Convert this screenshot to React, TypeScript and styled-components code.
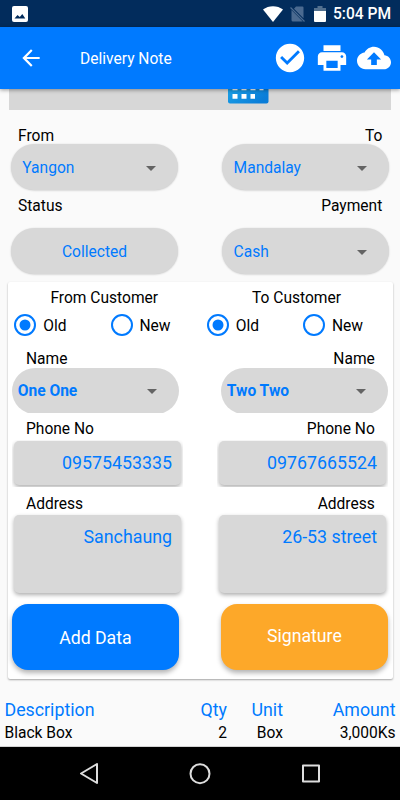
import React from 'react';
import styled, { createGlobalStyle } from 'styled-components';

const BLUE = '#007aff';
const GRAY = '#d8d8d8';

const GlobalStyle = createGlobalStyle`
  *, *::before, *::after { box-sizing: border-box; }
  html, body { margin: 0; padding: 0; background: #fafafa; }
  body {
    font-family: Roboto, 'Liberation Sans', sans-serif;
    font-size: 15.57px;
    color: #000;
    overflow: hidden;
  }
  button { font-family: inherit; }
`;

const Screen = styled.div`
  width: 400px;
  height: 800px;
  display: flex;
  flex-direction: column;
  background: #fafafa;
  overflow: hidden;
`;

const StatusBar = styled.header`
  flex: none;
  height: 27px;
  padding: 0 9px 0 12px;
  display: flex;
  align-items: center;
  background: #022c5c;
`;

const StatusIcons = styled.div`
  display: flex;
  align-items: center;
  margin-left: auto;
`;

const StatusSvg = styled.svg<{ $gap: number }>`
  display: block;
  margin-right: ${(p) => p.$gap}px;
`;

const Clock = styled.span`
  font-size: 15.57px;
  font-weight: 500;
  line-height: 25px;
  color: #fff;
  padding-top: 2px;
`;

const AppBar = styled.nav`
  flex: none;
  height: 62px;
  padding: 0 9px 0 18px;
  display: flex;
  align-items: center;
  background: ${BLUE};
  color: #fff;
  z-index: 1;
  box-shadow: 0 1px 4px rgba(0, 0, 0, 0.4);
`;

const IconButton = styled.button`
  display: flex;
  padding: 0;
  border: 0;
  background: none;
  color: inherit;
`;

const Title = styled.h1`
  margin: 0 auto 0 36px;
  font-size: 15.57px;
  font-weight: 400;
  line-height: 20px;
  padding-top: 1px;
`;

const Actions = styled.div`
  display: flex;
  gap: 8px;
`;

const Content = styled.main`
  flex: 1;
  min-height: 0;
  overflow: hidden;
  border-bottom: 1px solid #d2d2d2;
`;

const DateField = styled.div`
  height: 21px;
  margin: 0 9px;
  padding-left: 219px;
  background: #d7d7d7;
`;

const Columns = styled.div<{ $gap: number; $left: number; $top?: number }>`
  display: grid;
  grid-template-columns: 167px 167px;
  column-gap: ${(p) => p.$gap}px;
  padding: ${(p) => p.$top ?? 0}px 0 0 ${(p) => p.$left}px;
`;

const LabelRow = styled.div<{ $top: number; $bottom: number }>`
  display: flex;
  justify-content: space-between;
  line-height: 16px;
  padding: ${(p) => `${p.$top}px 17.7px ${p.$bottom}px 18px`};
`;

const Pill = styled.div<{ $centered?: boolean }>`
  height: 46px;
  padding: ${(p) => (p.$centered ? '2px 0 0' : '2px 22px 0 11.3px')};
  display: flex;
  align-items: center;
  justify-content: ${(p) => (p.$centered ? 'center' : 'space-between')};
  border-radius: 23px;
  background: ${GRAY};
  color: ${BLUE};
  box-shadow: 0 0.5px 2px rgba(0, 0, 0, 0.2);
`;

const PillClip = styled.div`
  height: 45px;
  overflow: hidden;
`;

const NamePill = styled(Pill)`
  padding: 0 22px 0 5.3px;
  font-weight: 700;
  box-shadow: none;
`;

const Card = styled.section`
  width: 384.5px;
  height: 397px;
  margin: 8px 0 0 8px;
  border-radius: 2px;
  background: #fff;
  box-shadow: 0 1px 2px rgba(0, 0, 0, 0.35);
`;

const CustomerHeads = styled.div`
  display: grid;
  grid-template-columns: 192.5px 192px;
  padding-top: 7px;
  line-height: 18px;
  text-align: center;
`;

const RadioRow = styled.div`
  display: grid;
  grid-template-columns: repeat(4, 96.25px);
  height: 36px;
  padding-left: 6.4px;
`;

const RadioLabel = styled.div`
  display: flex;
  align-items: center;
  gap: 6.8px;
`;

const RadioText = styled.span`
  line-height: 18px;
  padding-top: 1px;
`;

const RadioSvg = styled.svg`
  flex: none;
  display: block;
`;

const FieldClip = styled.div<{ $height: number }>`
  height: ${(p) => p.$height}px;
  padding: 1px 2px 0;
  margin: 0 -2px;
  overflow: hidden;
`;

const Field = styled.div<{ $height: number }>`
  height: ${(p) => p.$height}px;
  padding: 11px 9px 0 0;
  border-radius: 5px;
  background: ${GRAY};
  color: ${BLUE};
  font-size: 17.8px;
  line-height: 22px;
  text-align: right;
  box-shadow: 0 2px 4px rgba(0, 0, 0, 0.32);
`;

const ActionButton = styled.button<{ $tone: string; $lift?: boolean }>`
  height: 66px;
  padding: ${(p) => (p.$lift ? '0 1px 3px 0' : '1px 1px 0 0')};
  border: 0;
  border-radius: 16px;
  background: ${(p) => p.$tone};
  color: #fff;
  font-size: 17.7px;
  box-shadow: 0 3px 5px rgba(0, 0, 0, 0.3);
`;

const Table = styled.div`
  display: grid;
  grid-template-columns: 150px 72.5px 56px 112.5px;
  padding: 20px 4px 0 4.5px;
  row-gap: 2px;
`;

const HeadCell = styled.div<{ $start?: boolean }>`
  color: ${BLUE};
  font-size: 17.8px;
  line-height: 22px;
  text-align: ${(p) => (p.$start ? 'left' : 'right')};
`;

const Cell = styled.div<{ $start?: boolean }>`
  line-height: 20px;
  text-align: ${(p) => (p.$start ? 'left' : 'right')};
`;

const NavBar = styled.footer`
  flex: none;
  height: 53px;
  padding: 0 79px;
  display: flex;
  align-items: center;
  justify-content: space-between;
  background: #000;
`;

const Caret = () => (
  <svg width="10" height="5" viewBox="0 0 10 5" aria-hidden="true">
    <path d="M0 0h10L5 5z" fill="#646464" />
  </svg>
);

const Radio = ({ checked }: { checked: boolean }) => (
  <RadioSvg width="22" height="22" viewBox="0 0 22 22">
    <circle cx="11" cy="11" r="10" fill="none" stroke={BLUE} strokeWidth="2" />
    {checked && <circle cx="11" cy="11" r="5.5" fill={BLUE} />}
  </RadioSvg>
);

const MaterialIcon = ({ d, size }: { d: string; size: number }) => (
  <svg width={size} height={size} viewBox="0 0 24 24" fill="currentColor" aria-hidden="true">
    <path d={d} />
  </svg>
);

const CalendarIcon = () => (
  <svg width="41" height="15" viewBox="0 0 41 15" aria-hidden="true">
    <defs>
      <linearGradient id="calendar" x1="0" y1="0" x2="1" y2="0.4">
        <stop offset="0" stopColor="#1ba0e6" />
        <stop offset="1" stopColor="#0a7dd8" />
      </linearGradient>
    </defs>
    <path d="M0 0h40.500v12.500a2 2 0 0 1-2 2H2a2 2 0 0 1-2-2z" fill="url(#calendar)" />
    <path
      d="M4.500 0h5v1.200h-5zM13.500 0h5v1.200h-5zM22.500 0h5v1.200h-5zM31.500 0h4v1.200h-4zM4.500 5h5v4.700h-5zM13.500 5h5v4.700h-5zM22.500 5h4.500v4.700h-4.500z"
      fill="#fff"
    />
  </svg>
);

const radios = [
  { label: 'Old', checked: true },
  { label: 'New', checked: false },
  { label: 'Old', checked: true },
  { label: 'New', checked: false },
];

export default function App() {
  return (
    <>
      <GlobalStyle />
      <Screen>
        <StatusBar>
          <svg width="16" height="16" viewBox="0 0 16 16" aria-hidden="true">
            <rect width="16" height="16" rx="2" fill="#fff" />
            <path d="M2.500 12.500l3-3.500 2.300 2L10.300 8l3 4.500z" fill="#022c5c" />
          </svg>
          <StatusIcons>
            <StatusSvg $gap={7} width="20" height="16" viewBox="0 0 20 16">
              <path d="M10 16L0 3.600C5.500-.900 14.500-.900 20 3.600z" fill="#fff" />
            </StatusSvg>
            <StatusSvg $gap={9} width="15" height="16" viewBox="0 0 15 16">
              <path d="M6 0.500h6.500a1 1 0 0 1 1 1v10.800L4 2.800zM1.500 4l11.300 11.500H3a1.500 1.500 0 0 1-1.500-1.500z" fill="#4b6a90" />
              <path d="M.5 1.500l14 14" stroke="#4b6a90" strokeWidth="1.300" />
            </StatusSvg>
            <StatusSvg $gap={7} width="12" height="16" viewBox="0 0 12 16">
              <path d="M3.500 0h5v2H12v3H0V2h3.500z" fill="#52708f" />
              <path d="M0 5h12v10a1 1 0 0 1-1 1H1a1 1 0 0 1-1-1z" fill="#fff" />
            </StatusSvg>
            <Clock>5:04 PM</Clock>
          </StatusIcons>
        </StatusBar>

        <AppBar>
          <IconButton aria-label="Back">
            <MaterialIcon size={26} d="M20 11H7.830l5.590-5.590L12 4l-8 8 8 8 1.410-1.410L7.830 13H20v-2z" />
          </IconButton>
          <Title>Delivery Note</Title>
          <Actions>
            <IconButton aria-label="Confirm">
              <MaterialIcon
                size={34}
                d="M12 2C6.480 2 2 6.480 2 12s4.480 10 10 10 10-4.480 10-10S17.520 2 12 2zm-2 15l-5-5 1.410-1.410L10 14.170l7.590-7.590L19 8l-9 9z"
              />
            </IconButton>
            <IconButton aria-label="Print">
              <MaterialIcon
                size={34}
                d="M19 8H5c-1.660 0-3 1.340-3 3v6h4v4h12v-4h4v-6c0-1.660-1.340-3-3-3zm-3 11H8v-5h8v5zm3-7c-.550 0-1-.450-1-1s.450-1 1-1 1 .450 1 1-.450 1-1 1zm-1-9H6v4h12V3z"
              />
            </IconButton>
            <IconButton aria-label="Upload">
              <MaterialIcon
                size={34}
                d="M19.350 10.040C18.670 6.590 15.640 4 12 4 9.110 4 6.600 5.640 5.350 8.040 2.340 8.360 0 10.910 0 14c0 3.310 2.690 6 6 6h13c2.760 0 5-2.240 5-5 0-2.640-2.050-4.780-4.650-4.960zM14 13v4h-4v-4H7l5-5 5 5h-3z"
              />
            </IconButton>
          </Actions>
        </AppBar>

        <Content>
          <DateField>
            <CalendarIcon />
          </DateField>

          <LabelRow $top={18} $bottom={0}>
            <span>From</span>
            <span>To</span>
          </LabelRow>
          <Columns $left={11} $gap={44.3}>
            <Pill>
              Yangon
              <Caret />
            </Pill>
            <Pill>
              Mandalay
              <Caret />
            </Pill>
          </Columns>
          <LabelRow $top={8} $bottom={14}>
            <span>Status</span>
            <span>Payment</span>
          </LabelRow>
          <Columns $left={11} $gap={44.3}>
            <Pill $centered>Collected</Pill>
            <Pill>
              Cash
              <Caret />
            </Pill>
          </Columns>

          <Card>
            <CustomerHeads>
              <span>From Customer</span>
              <span>To Customer</span>
            </CustomerHeads>
            <RadioRow>
              {radios.map((r, i) => (
                <RadioLabel key={i}>
                  <Radio checked={r.checked} />
                  <RadioText>{r.label}</RadioText>
                </RadioLabel>
              ))}
            </RadioRow>
            <LabelRow $top={8} $bottom={1}>
              <span>Name</span>
              <span>Name</span>
            </LabelRow>
            <Columns $left={4.4} $gap={42}>
              <PillClip>
                <NamePill>
                  One One
                  <Caret />
                </NamePill>
              </PillClip>
              <PillClip>
                <NamePill>
                  Two Two
                  <Caret />
                </NamePill>
              </PillClip>
            </Columns>
            <LabelRow $top={8} $bottom={3}>
              <span>Phone No</span>
              <span>Phone No</span>
            </LabelRow>
            <Columns $left={6} $gap={38}>
              <FieldClip $height={47}>
                <Field $height={44}>09575453335</Field>
              </FieldClip>
              <FieldClip $height={47}>
                <Field $height={44}>09767665524</Field>
              </FieldClip>
            </Columns>
            <LabelRow $top={9} $bottom={3}>
              <span>Address</span>
              <span>Address</span>
            </LabelRow>
            <Columns $left={6} $gap={38}>
              <Field $height={78}>Sanchaung</Field>
              <Field $height={78}>26-53 street</Field>
            </Columns>
            <Columns $left={4.4} $gap={42} $top={11}>
              <ActionButton $tone={BLUE}>Add Data</ActionButton>
              <ActionButton $tone="#fda829" $lift>
                Signature
              </ActionButton>
            </Columns>
          </Card>

          <Table>
            <HeadCell $start>Description</HeadCell>
            <HeadCell>Qty</HeadCell>
            <HeadCell>Unit</HeadCell>
            <HeadCell>Amount</HeadCell>
            <Cell $start>Black Box</Cell>
            <Cell>2</Cell>
            <Cell>Box</Cell>
            <Cell>3,000Ks</Cell>
          </Table>
        </Content>

        <NavBar>
          <svg width="20" height="22" viewBox="0 0 20 22" fill="none" stroke="#ddd" strokeWidth="2" strokeLinejoin="round">
            <path d="M18 1v19L2 10.500z" />
          </svg>
          <svg width="22" height="22" viewBox="0 0 22 22" fill="none" stroke="#ddd" strokeWidth="2">
            <circle cx="11" cy="10.700" r="9.500" />
          </svg>
          <svg width="20" height="20" viewBox="0 0 20 20" fill="none" stroke="#ddd" strokeWidth="2" strokeLinejoin="round">
            <path d="M2 1.500h16v16H2z" />
          </svg>
        </NavBar>
      </Screen>
    </>
  );
}
